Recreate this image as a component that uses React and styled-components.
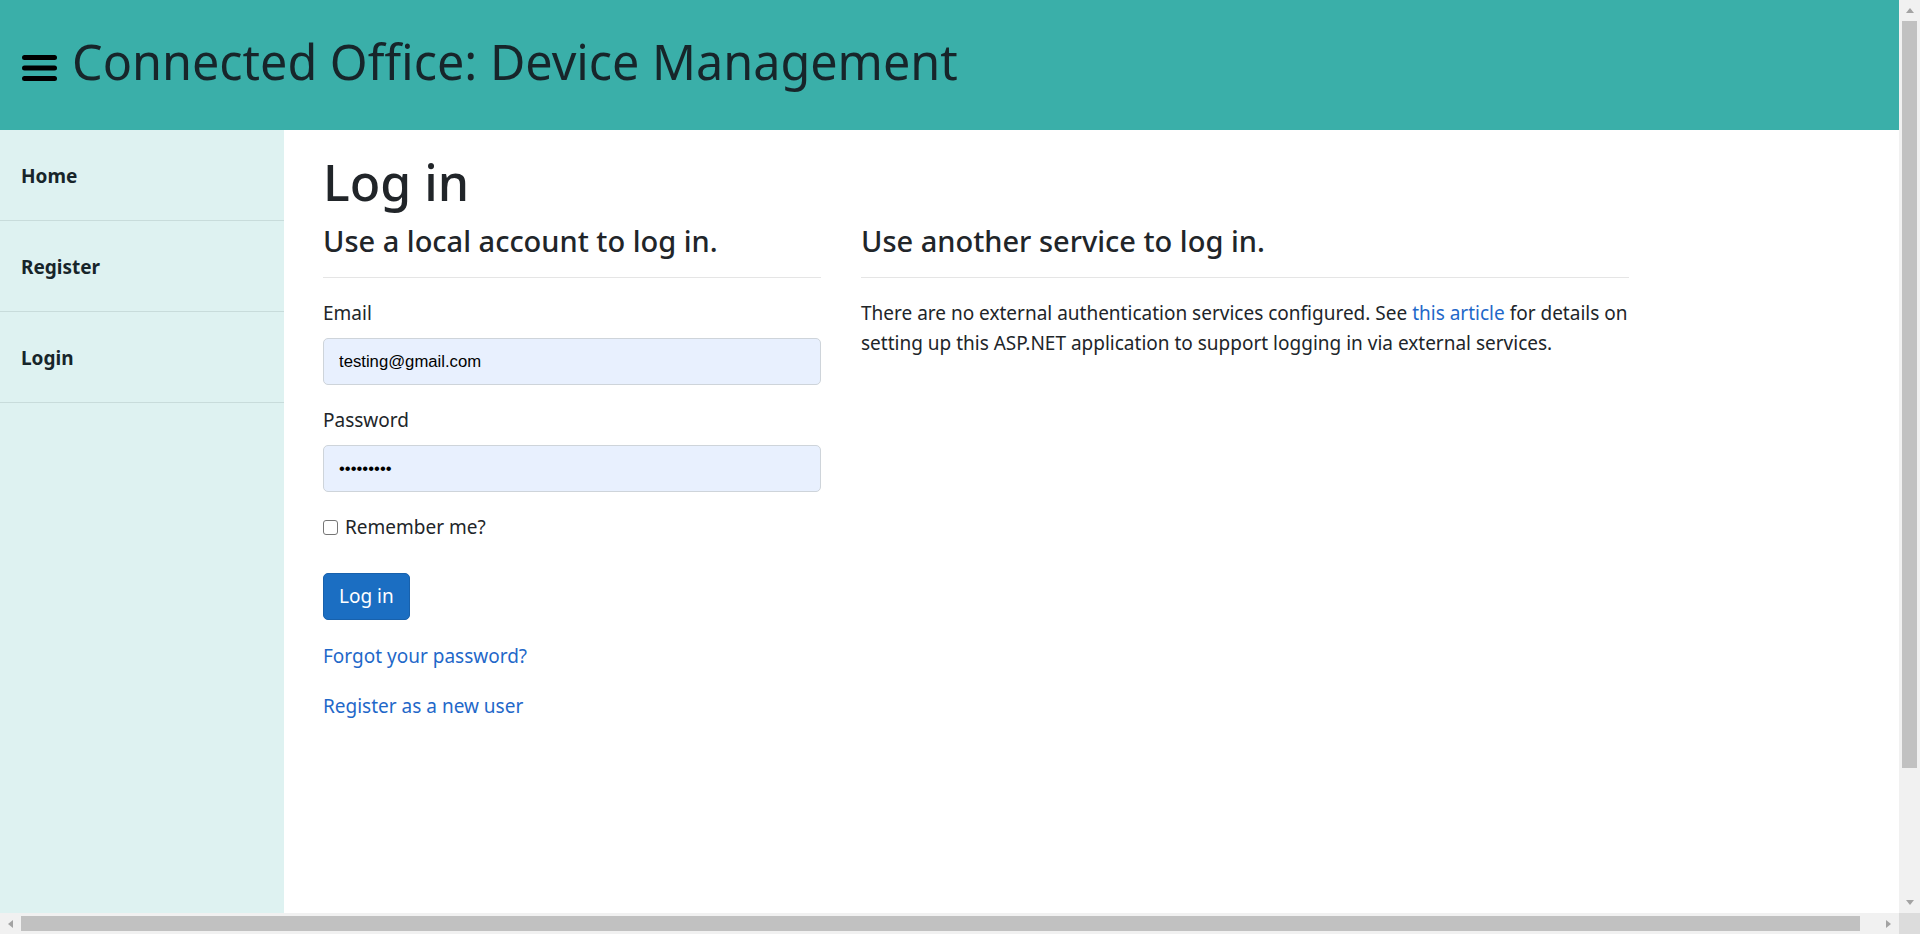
import React from 'react';
import styled, { createGlobalStyle } from 'styled-components';

const GlobalStyle = createGlobalStyle`
  html, body {
    margin: 0;
    padding: 0;
    overflow: hidden;
  }

  body {
    font-family: "Noto Sans", "Open Sans", sans-serif;
    color: #212529;
    background-color: #fff;
  }
`;

/* browser frame: the page viewport plus the two scroll bars the screenshot shows */
const Window = styled.div`
  display: grid;
  grid-template-columns: 1fr 21px;
  grid-template-rows: 1fr 21px;
  width: 100vw;
  height: 100vh;
`;

const Viewport = styled.div`
  min-width: 0;
  min-height: 0;
  overflow: hidden;
`;

const ScrollBar = styled.div`
  display: flex;
  flex-direction: ${(p) => (p.vertical ? 'column' : 'row')};
  background-color: #f1f1f1;
`;

const ScrollArrow = styled.div`
  display: flex;
  align-items: center;
  justify-content: center;
  width: 21px;
  height: 21px;
  flex-shrink: 0;
`;

const ScrollTrack = styled.div`
  flex: 1;
  display: flex;
  flex-direction: ${(p) => (p.vertical ? 'column' : 'row')};
  align-items: center;
`;

const ScrollThumb = styled.div`
  width: ${(p) => (p.vertical ? '15px' : `${p.size}px`)};
  height: ${(p) => (p.vertical ? `${p.size}px` : '15px')};
  background-color: #c1c1c1;
`;

const ScrollCorner = styled.div`
  background-color: #dcdcdc;
`;

const Page = styled.div`
  width: 1918px;
  height: 1060px;
  display: grid;
  grid-template-rows: 130px 1fr;
`;

const Header = styled.header`
  display: flex;
  align-items: center;
  gap: 15px;
  padding: 0 22px;
  background-color: #3aafa9;
`;

const MenuButton = styled.button`
  display: flex;
  margin-top: 6px;
  padding: 0;
  border: none;
  background: none;
  cursor: pointer;
`;

const SiteTitle = styled.h1`
  margin: 0 0 8px;
  font-size: 48.5px;
  font-weight: 400;
  line-height: 60px;
  color: #17252a;
`;

const Body = styled.div`
  display: flex;
`;

const Sidebar = styled.nav`
  width: 284px;
  flex-shrink: 0;
  background-color: #def2f1;
`;

const NavItem = styled.a`
  display: block;
  padding: 31px 21px 29px;
  border-bottom: 1px solid #c8dcdb;
  font-size: 19px;
  font-weight: 700;
  line-height: 30px;
  color: #17252a;
  text-decoration: none;
`;

const Main = styled.main`
  flex: 1;
  padding: 22px 0 0 39px;
`;

const PageTitle = styled.h1`
  margin: 0 0 11px;
  font-size: 50px;
  font-weight: 500;
  line-height: 60px;
`;

const Row = styled.div`
  display: flex;
  gap: 40px;
`;

const Column = styled.section`
  width: ${(p) => p.width}px;
  flex-shrink: 0;
`;

const SectionTitle = styled.h4`
  margin: 0;
  font-size: 29px;
  font-weight: 500;
  line-height: 36px;
`;

const Rule = styled.hr`
  margin: 18px 0 20px;
  border: 0;
  border-top: 1px solid rgba(0, 0, 0, 0.1);
`;

const FormGroup = styled.div`
  margin-bottom: ${(p) => p.gap || 20}px;
`;

const Label = styled.label`
  display: block;
  margin-bottom: 10px;
  font-size: 19px;
  line-height: 30px;
`;

const Input = styled.input`
  display: block;
  width: 100%;
  height: 47px;
  box-sizing: border-box;
  padding: 0 15px;
  border: 1px solid #ced4da;
  border-radius: 5px;
  background-color: #e8f0fe;
  font-family: "Liberation Sans", Arial, sans-serif;
  font-size: 16.7px;
  color: #000;
  outline: none;
`;

const CheckRow = styled.label`
  display: flex;
  align-items: center;
  gap: 7px;
  margin-bottom: 31px;
  font-size: 19px;
  line-height: 30px;
`;

const Checkbox = styled.input`
  appearance: none;
  width: 15px;
  height: 15px;
  margin: 0;
  border: 1px solid #767676;
  border-radius: 3px;
  background-color: #fff;
`;

const PrimaryButton = styled.button`
  padding: 7px 15px;
  border: 1px solid #1861ac;
  border-radius: 5px;
  background-color: #1b6ec2;
  font-family: inherit;
  font-size: 19px;
  line-height: 31px;
  color: #fff;
  cursor: pointer;
`;

const Text = styled.p`
  margin: 0 0 20px;
  font-size: 19px;
  line-height: 30px;
`;

const Link = styled.a`
  color: #1f68c9;
  text-decoration: none;
`;

function MenuIcon() {
  return (
    <svg width="35" height="26" viewBox="0 0 35 26">
      <rect x="0" y="0" width="35" height="5" rx="2.5" fill="#000" />
      <rect x="0" y="10.5" width="35" height="5" rx="2.5" fill="#000" />
      <rect x="0" y="21" width="35" height="5" rx="2.5" fill="#000" />
    </svg>
  );
}

const arrowPoints = {
  up: '0,5 4,0 8,5',
  down: '0,0 8,0 4,5',
  left: '5,0 5,8 0,4',
  right: '0,0 0,8 5,4',
};

function Arrow({ dir }) {
  const horizontal = dir === 'left' || dir === 'right';
  return (
    <ScrollArrow>
      <svg width={horizontal ? 5 : 8} height={horizontal ? 8 : 5}>
        <polygon points={arrowPoints[dir]} fill="#a3a3a3" />
      </svg>
    </ScrollArrow>
  );
}

function LoginPage() {
  return (
    <Page>
      <Header>
        <MenuButton aria-label="menu">
          <MenuIcon />
        </MenuButton>
        <SiteTitle>Connected Office: Device Management</SiteTitle>
      </Header>
      <Body>
        <Sidebar>
          <NavItem href="#">Home</NavItem>
          <NavItem href="#">Register</NavItem>
          <NavItem href="#">Login</NavItem>
        </Sidebar>
        <Main>
          <PageTitle>Log in</PageTitle>
          <Row>
            <Column width={498}>
              <form onSubmit={(e) => e.preventDefault()}>
                <SectionTitle>Use a local account to log in.</SectionTitle>
                <Rule />
                <FormGroup>
                  <Label htmlFor="email">Email</Label>
                  <Input id="email" type="email" defaultValue="testing@gmail.com" />
                </FormGroup>
                <FormGroup>
                  <Label htmlFor="password">Password</Label>
                  <Input id="password" type="password" defaultValue="123456789" />
                </FormGroup>
                <CheckRow>
                  <Checkbox type="checkbox" />
                  Remember me?
                </CheckRow>
                <FormGroup gap={21}>
                  <PrimaryButton type="submit">Log in</PrimaryButton>
                </FormGroup>
                <Text>
                  <Link href="#">Forgot your password?</Link>
                </Text>
                <Text>
                  <Link href="#">Register as a new user</Link>
                </Text>
              </form>
            </Column>
            <Column width={768}>
              <SectionTitle>Use another service to log in.</SectionTitle>
              <Rule />
              <Text>
                There are no external authentication services configured. See{' '}
                <Link href="#">this article</Link> for details on setting up this
                ASP.NET application to support logging in via external services.
              </Text>
            </Column>
          </Row>
        </Main>
      </Body>
    </Page>
  );
}

export default function App() {
  return (
    <>
      <GlobalStyle />
      <Window>
        <Viewport>
          <LoginPage />
        </Viewport>
        <ScrollBar vertical>
          <Arrow dir="up" />
          <ScrollTrack vertical>
            <ScrollThumb vertical size={747} />
          </ScrollTrack>
          <Arrow dir="down" />
        </ScrollBar>
        <ScrollBar>
          <Arrow dir="left" />
          <ScrollTrack>
            <ScrollThumb size={1839} />
          </ScrollTrack>
          <Arrow dir="right" />
        </ScrollBar>
        <ScrollCorner />
      </Window>
    </>
  );
}
